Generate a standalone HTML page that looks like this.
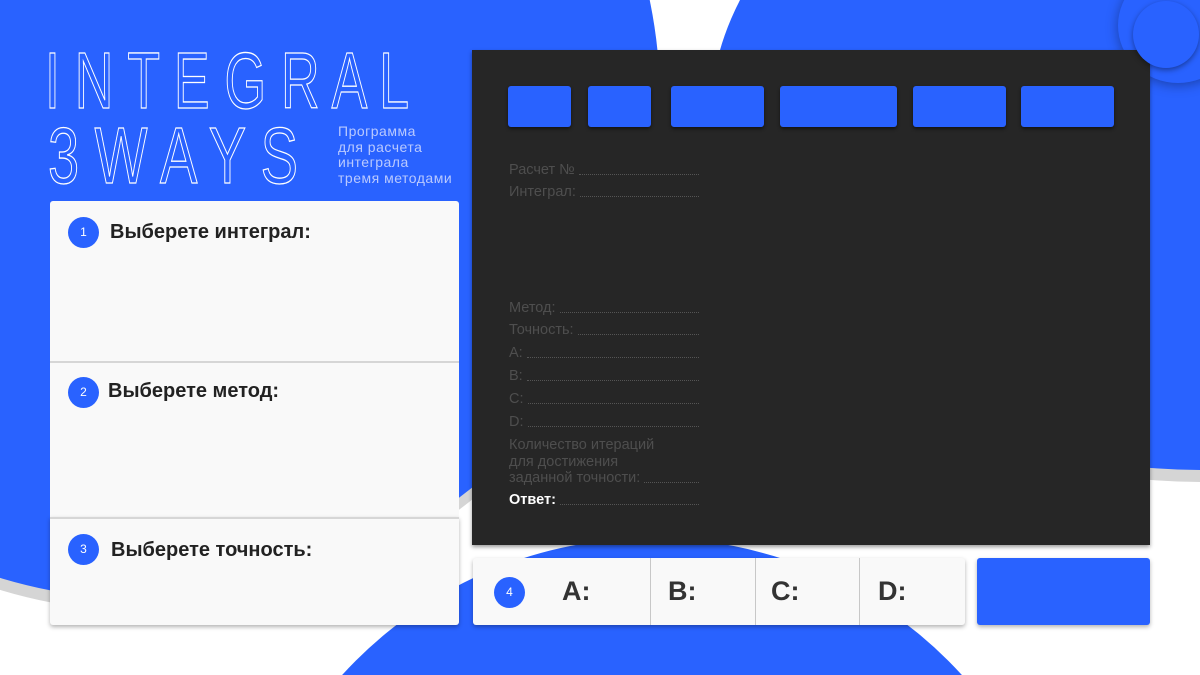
<!DOCTYPE html>
<html><head><meta charset="utf-8"><style>
*{margin:0;padding:0;box-sizing:border-box}
html,body{width:1200px;height:675px;overflow:hidden}
body{position:relative;background:#fff;font-family:"Liberation Sans","DejaVu Sans",sans-serif}
#w{position:absolute;left:0;top:0;width:1200px;height:675px;overflow:hidden}
.abs{position:absolute}
.lbl{position:absolute;left:509px;width:190px;color:#4e4e4e;font-size:14.5px;display:flex;align-items:flex-end;white-space:nowrap;line-height:16px}
.lbl .d{flex:1;border-bottom:1px dotted #555;margin:0 0 3px 4px}
.card{position:absolute;left:50px;width:409px;background:#f9f9f9}
.num{position:absolute;width:31px;height:31px;border-radius:50%;background:#2962ff;color:#fff;font-size:12px;text-align:center;line-height:31px}
.ttl{position:absolute;font-weight:bold;font-size:20px;color:#222}
.btn{position:absolute;top:86px;height:41px;background:#2962ff;border-radius:3px;box-shadow:0 2px 3px rgba(0,0,0,.5)}
.bl{position:absolute;top:576px;font-size:27px;font-weight:bold;color:#333}
.sep{position:absolute;top:558px;width:1px;height:67px;background:#c8c8c8}
</style></head><body><div id="w">
<div class="abs" style="left:-360px;top:-400px;width:1020px;height:1000px;border-radius:50%;background:#2962ff;box-shadow:0 12px 0 #d5d5d5"></div>
<div class="abs" style="left:710px;top:-230px;width:990px;height:700px;border-radius:50%;background:#2962ff;box-shadow:0 12px 0 #d5d5d5"></div>
<div class="abs" style="left:233px;top:538px;width:838px;height:838px;border-radius:50%;background:#2962ff"></div>
<div class="abs" style="left:1118px;top:-32px;width:120px;height:115px;border-radius:50%;background:#2962ff;box-shadow:0 2px 12px rgba(0,0,0,.35)"></div>

<svg width="430" height="200" class="abs" style="left:43px;top:38px"><text x="2" y="70" font-family="Liberation Sans" font-size="80" fill="none" stroke="#fff" stroke-width="1.3" textLength="364" lengthAdjust="spacingAndGlyphs">I N T E G R A L</text><text x="5" y="145" font-family="Liberation Sans" font-size="80" fill="none" stroke="#fff" stroke-width="1.3" textLength="250" lengthAdjust="spacingAndGlyphs">3 W A Y S</text></svg>
<div class="abs" style="left:338px;top:124px;color:#b9c9ff;font-size:14px;line-height:15.5px;letter-spacing:.5px">Программа<br>для расчета<br>интеграла<br>тремя методами</div>

<div class="abs" style="left:472px;top:50px;width:678px;height:495px;background:#262626;box-shadow:0 2px 4px rgba(0,0,0,.4)"></div>
<div class="btn" style="left:508px;width:63px"></div>
<div class="btn" style="left:588px;width:63px"></div>
<div class="btn" style="left:671px;width:93px"></div>
<div class="btn" style="left:780px;width:117px"></div>
<div class="btn" style="left:913px;width:93px"></div>
<div class="btn" style="left:1021px;width:93px"></div>
<div class="abs" style="left:1133px;top:1px;width:66px;height:67px;border-radius:50%;background:#2962ff;box-shadow:0 2px 6px rgba(0,0,0,.4)"></div>

<div class="lbl" style="top:162px">Расчет №<span class="d"></span></div>
<div class="lbl" style="top:184px">Интеграл:<span class="d"></span></div>
<div class="lbl" style="top:300px">Метод:<span class="d"></span></div>
<div class="lbl" style="top:322px">Точность:<span class="d"></span></div>
<div class="lbl" style="top:345px">A:<span class="d"></span></div>
<div class="lbl" style="top:368px">B:<span class="d"></span></div>
<div class="lbl" style="top:391px">C:<span class="d"></span></div>
<div class="lbl" style="top:414px">D:<span class="d"></span></div>
<div class="lbl" style="top:437px;display:block;line-height:16.5px">Количество итераций<br>для достижения</div>
<div class="lbl" style="top:470px">заданной точности:<span class="d"></span></div>
<div class="lbl" style="top:492px"><b style="color:#fff">Ответ:</b><span class="d"></span></div>

<div class="card" style="top:201px;height:160px;border-radius:3px 3px 0 0"></div>
<div class="card" style="top:361px;height:157px;border-top:2px solid #d6d6d6"></div>
<div class="card" style="top:517px;height:108px;border-top:2px solid #d6d6d6;border-radius:0 0 3px 3px;box-shadow:0 2px 4px rgba(0,0,0,.3)"></div>
<div class="num" style="left:68px;top:217px">1</div><div class="ttl" style="left:110px;top:221px">Выберете интеграл:</div>
<div class="num" style="left:68px;top:377px">2</div><div class="ttl" style="left:108px;top:380px">Выберете метод:</div>
<div class="num" style="left:68px;top:534px">3</div><div class="ttl" style="left:111px;top:539px">Выберете точность:</div>

<div class="abs" style="left:473px;top:558px;width:492px;height:67px;background:#f9f9f9;border-radius:3px;box-shadow:0 2px 4px rgba(0,0,0,.3)"></div>
<div class="num" style="left:494px;top:577px">4</div>
<div class="bl" style="left:562px">A:</div>
<div class="sep" style="left:650px"></div><div class="bl" style="left:668px">B:</div>
<div class="sep" style="left:755px"></div><div class="bl" style="left:771px">C:</div>
<div class="sep" style="left:859px"></div><div class="bl" style="left:878px">D:</div>
<div class="abs" style="left:977px;top:558px;width:173px;height:67px;background:#2962ff;border-radius:3px;box-shadow:0 2px 4px rgba(0,0,0,.3)"></div>
</div></body></html>
